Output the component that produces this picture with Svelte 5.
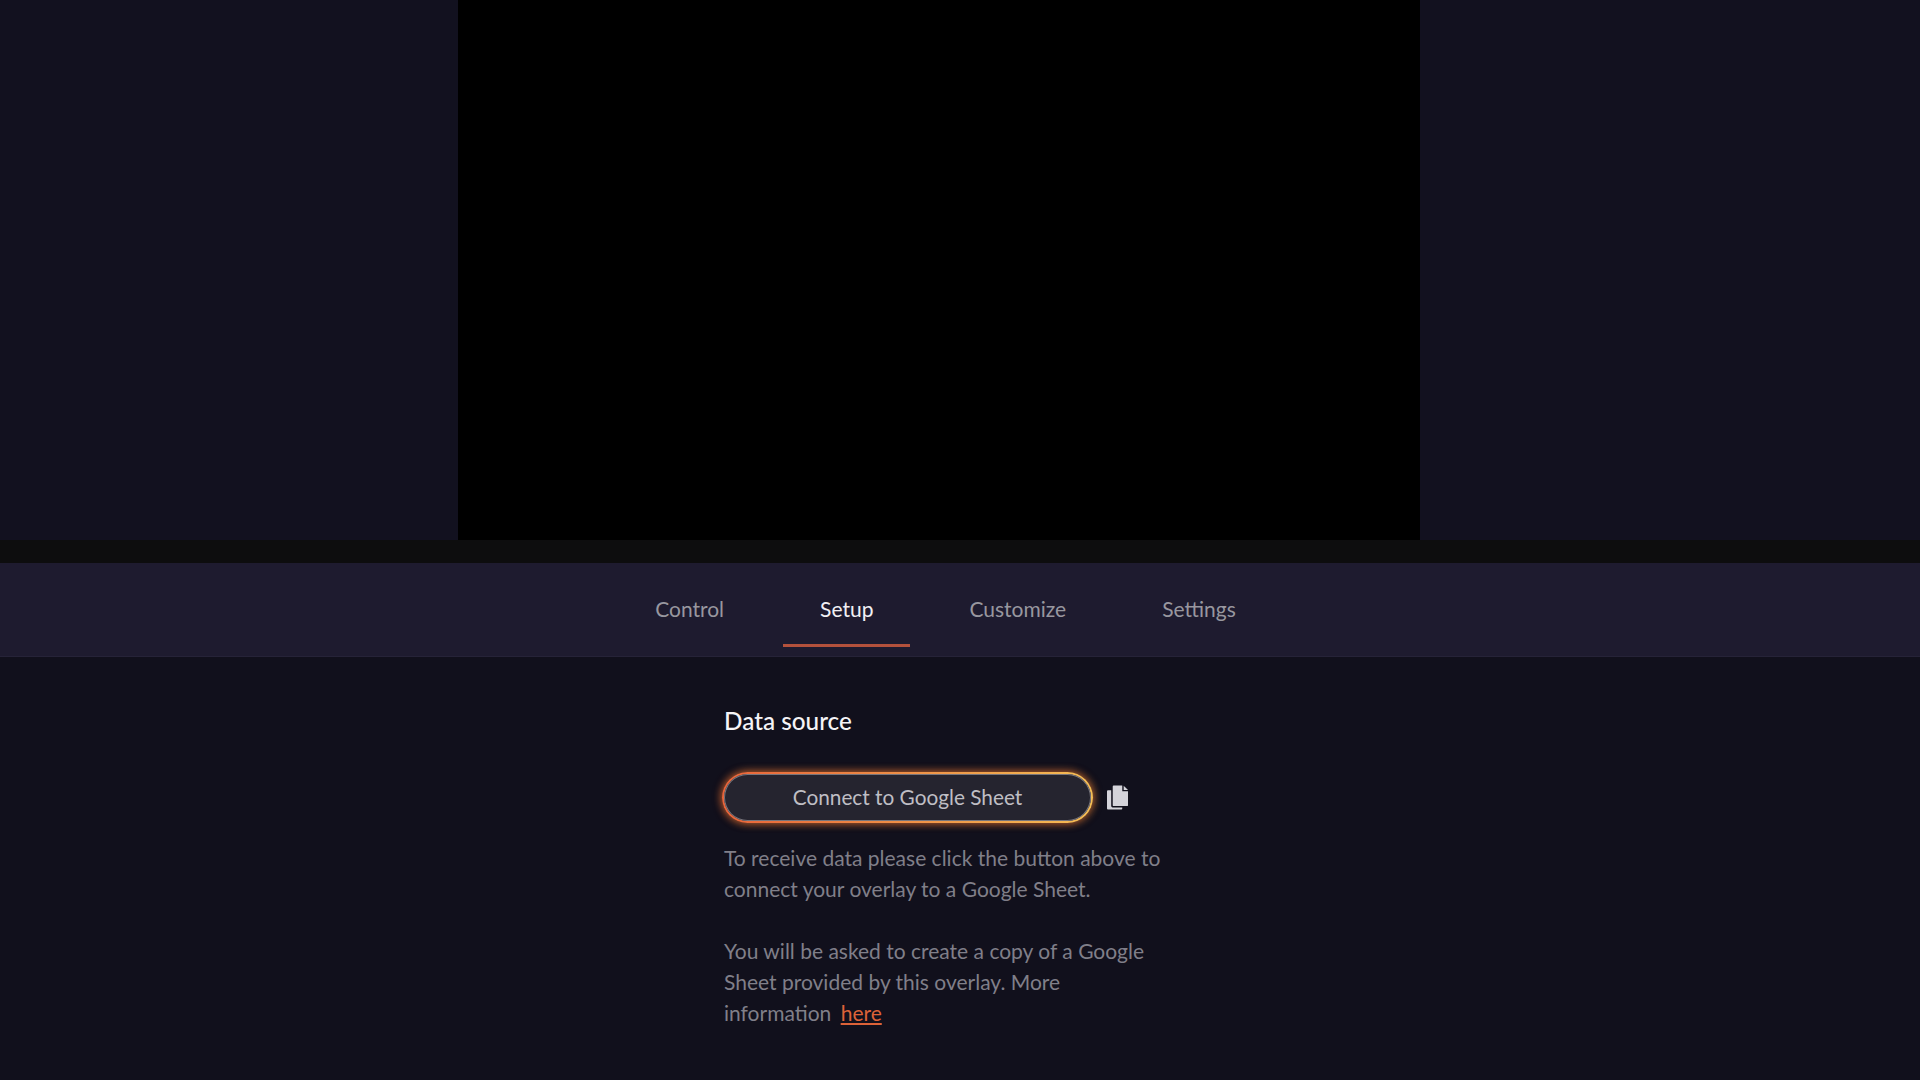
<script>
  const tabs = ["Control", "Setup", "Customize", "Settings"]
  let active = $state("Setup")
</script>

<div class="page">
  <div class="stage">
    <div class="video"></div>
  </div>
  <div class="strip"></div>
  <nav class="tabs">
    {#each tabs as tab}
      <button class="tab" class:active={tab === active} onclick={() => (active = tab)}>{tab}</button>
    {/each}
  </nav>
  <main class="content">
    <section class="panel">
      <h2>Data source</h2>
      <div class="connect">
        <button class="sheet-btn"><span>Connect to Google Sheet</span></button>
        <svg class="copy" width="21" height="25" viewBox="0 0 22 25" aria-hidden="true">
          <path fill="#d4d3da" d="M7 0h9v6h6v14.5a1 1 0 0 1-1 1H7a1 1 0 0 1-1-1V1a1 1 0 0 1 1-1z" />
          <path fill="#d4d3da" d="M17.5 0.3L22 4.6h-4.5z" />
          <path fill="#d4d3da" d="M1 5h3.4v16.5a1.5 1.5 0 0 0 1.5 1.5H16v1a1 1 0 0 1-1 1H1a1 1 0 0 1-1-1V6a1 1 0 0 1 1-1z" />
        </svg>
      </div>
      <p>To receive data please click the button above to connect your overlay to a Google Sheet.</p>
      <p>You will be asked to create a copy of a Google Sheet provided by this overlay. More information <a href="#here">here</a></p>
    </section>
  </main>
</div>

<style>
  :global(body) {
    margin: 0;
    background: #11101c;
  }
  .page {
    height: 1080px;
    overflow: hidden;
    display: flex;
    flex-direction: column;
    background: #11101c;
    font-family: Lato, "Noto Sans", sans-serif;
  }
  .stage {
    height: 540px;
    display: flex;
    justify-content: center;
    padding-right: 42px;
    background: #12111f;
  }
  .video {
    width: 962px;
    background: #000;
  }
  .strip {
    height: 23px;
    background: #0d0d0e;
  }
  .tabs {
    height: 94px;
    box-sizing: border-box;
    display: flex;
    justify-content: center;
    padding-right: 29px;
    gap: 22px;
    background: #1e1b2f;
    border-bottom: 1px solid #262338;
  }
  .tab {
    height: 84px;
    padding: 10px 37px 0;
    border: 0;
    border-bottom: 3px solid transparent;
    background: none;
    color: #98979f;
    font: inherit;
    font-size: 21px;
    cursor: pointer;
  }
  .tab.active {
    color: #f1f0f4;
    border-bottom-color: #b3513c;
  }
  .content {
    flex: 1;
    display: flex;
    justify-content: center;
    padding-right: 32px;
  }
  .panel {
    width: 440px;
    padding-top: 48px;
  }
  h2 {
    margin: 0 0 35px;
    font-size: 24.3px;
    font-weight: 500;
    line-height: 32px;
    color: #f5f4f7;
  }
  .connect {
    display: flex;
    align-items: center;
    gap: 14px;
    margin-left: -2px;
    margin-bottom: 19px;
  }
  .sheet-btn {
    width: 371px;
    height: 51px;
    padding: 2px;
    border: 0;
    border-radius: 26px;
    background: linear-gradient(90deg, #e8643a, #f5bd55);
    box-shadow: -1px 0 8px rgba(232, 90, 40, 0.6), 1px 0 8px rgba(240, 160, 60, 0.5);
    font: inherit;
    cursor: pointer;
  }
  .sheet-btn span {
    display: block;
    height: 100%;
    line-height: 45px;
    border-radius: 24px;
    background: #25242f;
    box-shadow: inset 0 0 0 1px #77757c;
    color: #bfbec4;
    font-size: 20.8px;
  }
  p {
    margin: 0 0 31px;
    font-size: 21px;
    line-height: 31px;
    color: #807f89;
  }
  a {
    margin-left: 4px;
    color: #dd6238;
  }
</style>
